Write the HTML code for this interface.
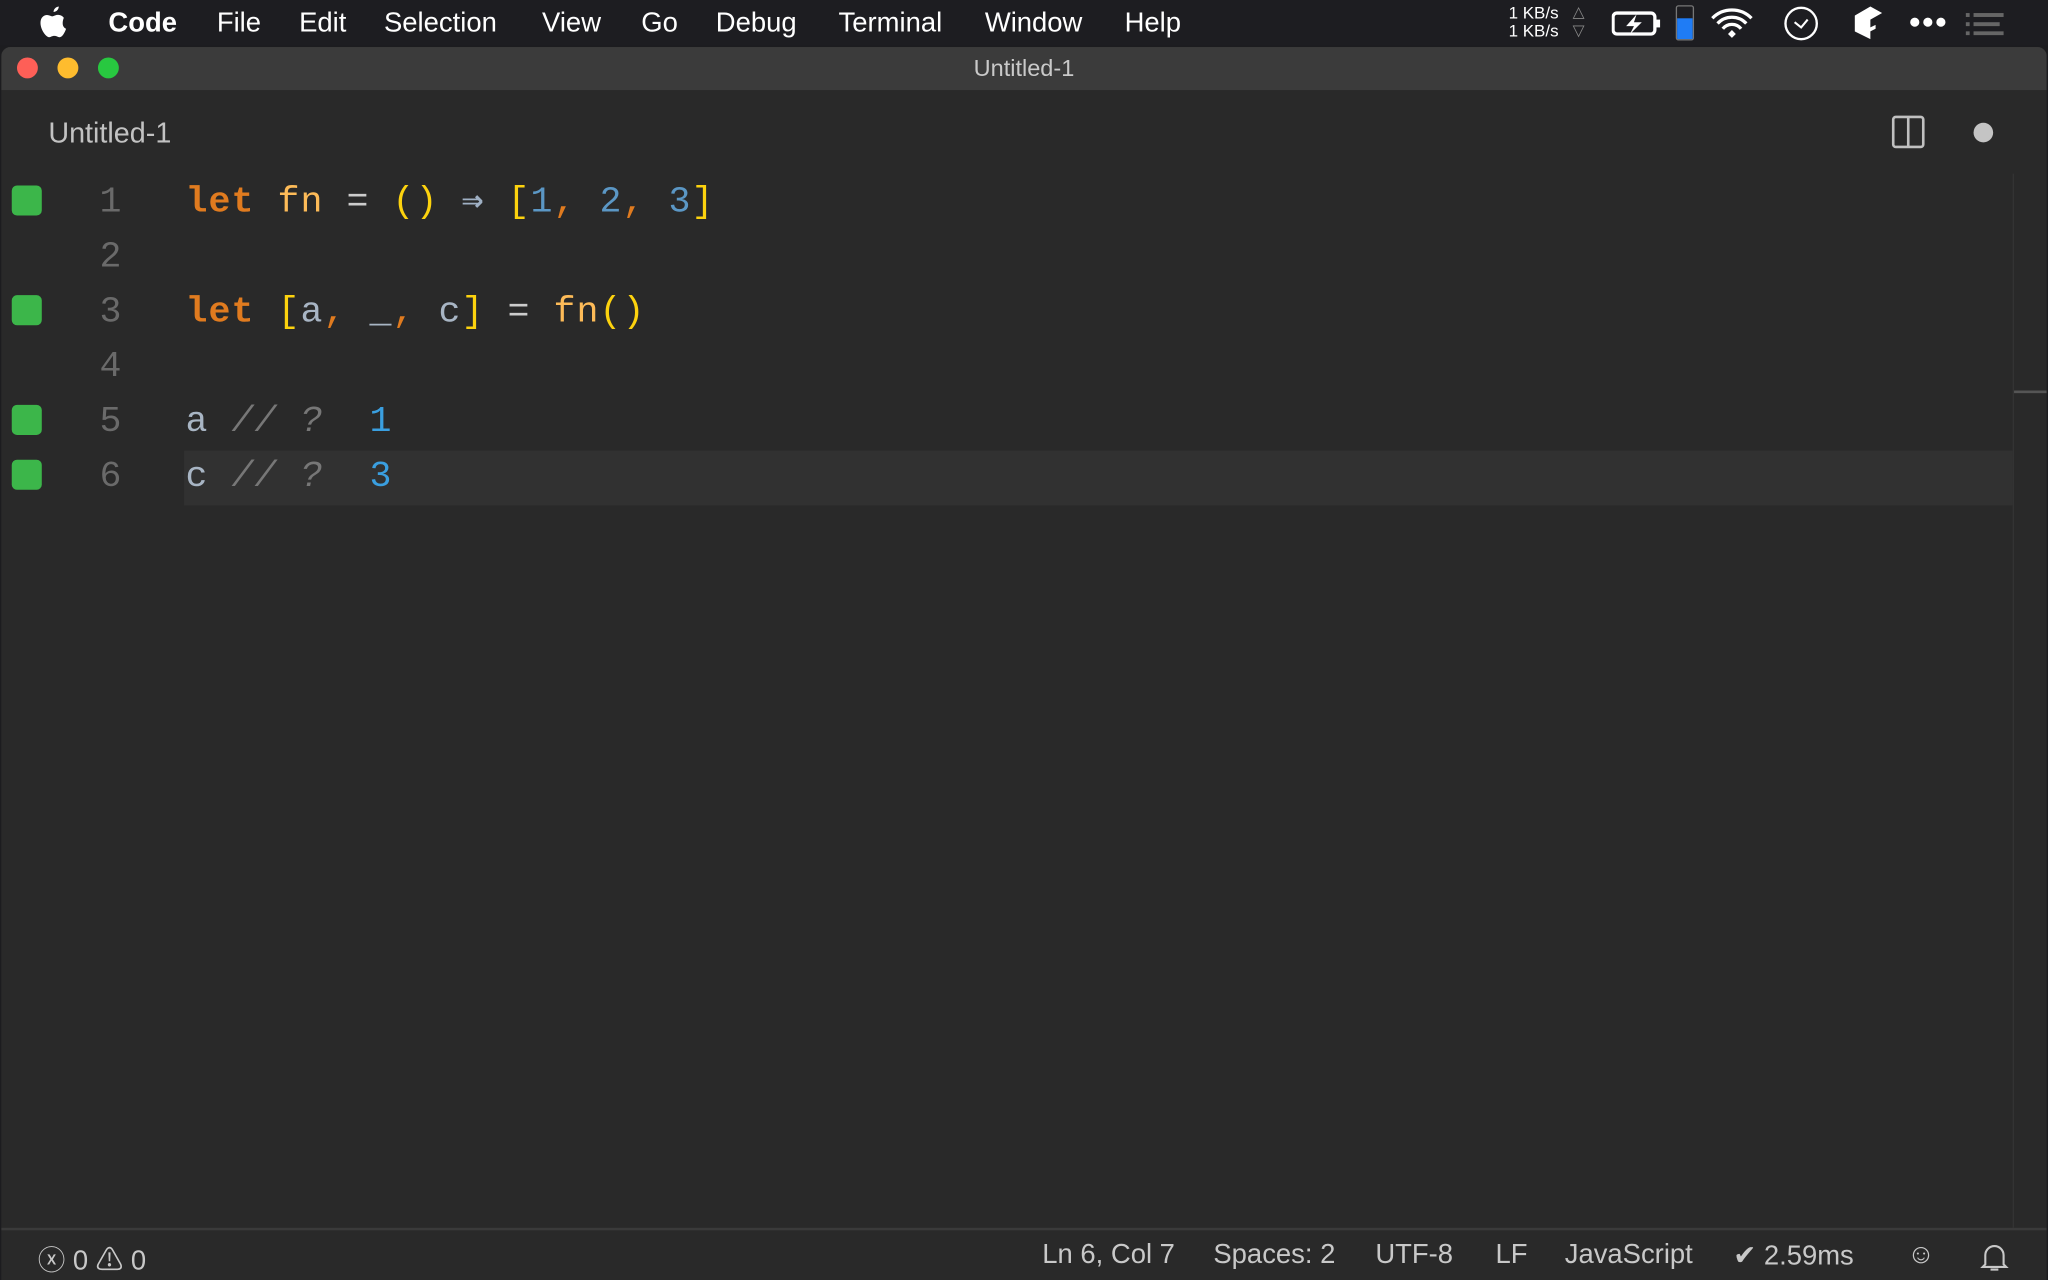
<!DOCTYPE html>
<html><head><meta charset="utf-8"><style>
html,body{margin:0;padding:0;width:2048px;height:1280px;overflow:hidden;background:#1c1c1f}
#w{position:absolute;left:0;top:0;width:1568px;height:980px;transform:scale(1.306122);transform-origin:0 0;font-family:"Liberation Sans",sans-serif}
.menu{position:absolute;left:0;top:0;width:1568px;height:35px;background:#1d1d21;color:#fff;font-size:21px}
.menu span{position:absolute;top:6px}
.win{position:absolute;left:1px;top:36px;width:1566px;height:944px;background:#292929;border-radius:7px 7px 0 0;overflow:hidden}
.title{position:absolute;left:0;top:0;width:100%;height:33px;background:#3b3b3b;color:#c9c9c9;font-size:18px;text-align:center;line-height:33px}
.dot{position:absolute;top:8px;width:16px;height:16px;border-radius:50%}
.tab{position:absolute;left:36px;top:53px;color:#c2c2c2;font-size:22px}
.code{position:absolute;font-family:"Liberation Mono",monospace;font-size:28px;letter-spacing:0.8px;line-height:42px;white-space:pre}
.g{position:absolute;left:8px;width:23px;height:23px;background:#3cb64a;border-radius:4px}
.ln{position:absolute;left:40px;width:52px;text-align:right;font-family:"Liberation Mono",monospace;font-size:28px;color:#6a6a6a;line-height:42px}
.status{position:absolute;left:0;top:904px;width:100%;height:40px;border-top:2px solid #3a3a3a;background:#292929;color:#c8c8c8;font-size:21px}
.status span{position:absolute;top:7px}
</style></head><body><div id="w">
<div class="menu">
<svg style="position:absolute;left:30px;top:5px" width="22" height="25" viewBox="0 0 22 25"><path d="M15 0c0 2-1.5 4-4 4.2C11 2 12.7.3 15 0zM18 13c0 3 2.5 4 2.6 4-1 3-3 6.5-5 6.5-1.5 0-2-1-4-1s-2.6 1-4 1C5.5 23.5 1 18 1 12.5 1 8.5 3.5 6.5 6 6.5c1.6 0 3 1 4 1s2.5-1.2 4.5-1.1c.8 0 3 .3 4.400 2.300C18.800 8.800 18 10.5 18 13z" fill="#fff"/></svg>
<span style="left:83px;font-weight:bold">Code</span><span style="left:166px">File</span><span style="left:229px">Edit</span><span style="left:294px">Selection</span><span style="left:415px">View</span><span style="left:491px">Go</span><span style="left:548px">Debug</span><span style="left:642px">Terminal</span><span style="left:754px">Window</span><span style="left:861px">Help</span>
<div style="position:absolute;left:1155px;top:3px;font-size:13px;line-height:14px">1 KB/s<br>1 KB/s</div>
<div style="position:absolute;left:1204px;top:2px;font-size:12px;line-height:14px;color:#888">△<br>▽</div>
<svg style="position:absolute;left:1234px;top:8px" width="44" height="22"><rect x="1" y="2" width="32" height="16" rx="3" fill="none" stroke="#fff" stroke-width="2.5"/><rect x="34" y="7" width="3" height="6" fill="#fff"/><path d="M19 3l-8 9h6l-3 6 9-9h-6z" fill="#fff"/></svg>
<div style="position:absolute;left:1283px;top:4px;width:12px;height:25px;border:1.5px solid #777;border-radius:2px;overflow:hidden"><div style="margin-top:9px;height:16px;background:#1f7cf5"></div></div>
<svg style="position:absolute;left:1309px;top:6px" width="34" height="24" viewBox="0 0 34 24"><path d="M2 8a21 21 0 0 1 30 0M6 12a15 15 0 0 1 22 0M10 16a9 9 0 0 1 14 0" stroke="#fff" stroke-width="2.5" fill="none"/><path d="M14 20l3-3 3 3-3 3z" fill="#fff"/></svg>
<svg style="position:absolute;left:1365px;top:4px" width="28" height="28"><circle cx="14" cy="14" r="12" fill="none" stroke="#fff" stroke-width="1.8"/><path d="M9 13l5 4 5-6" stroke="#fff" stroke-width="1.6" fill="none"/></svg>
<svg style="position:absolute;left:1420px;top:5px" width="22" height="26"><path d="M0 7L12 0l9 5-9 5v6l4-2v3l-4 2v6L0 19z" fill="#fff"/></svg>
<svg style="position:absolute;left:1462px;top:12px" width="28" height="10"><circle cx="4" cy="5" r="3.5" fill="#fff"/><circle cx="14" cy="5" r="3.5" fill="#fff"/><circle cx="24" cy="5" r="3.5" fill="#fff"/></svg>
<svg style="position:absolute;left:1505px;top:9px" width="30" height="18"><g fill="#666"><rect x="0" y="1" width="3" height="3"/><rect x="6" y="1" width="23" height="3"/><rect x="0" y="8" width="3" height="3"/><rect x="6" y="8" width="20" height="3"/><rect x="0" y="15" width="3" height="3"/><rect x="6" y="15" width="23" height="3"/></g></svg>
</div>
<div class="win">
<div class="title">Untitled-1</div>
<div class="dot" style="left:12px;background:#fe5f57"></div><div class="dot" style="left:43px;background:#febc2e"></div><div class="dot" style="left:74px;background:#28c840"></div>
<div class="tab">Untitled-1</div>
<svg style="position:absolute;left:1447px;top:52px" width="26" height="26"><rect x="1.5" y="1.5" width="23" height="23" rx="2" fill="none" stroke="#c0c0c0" stroke-width="2"/><line x1="13" y1="2" x2="13" y2="24" stroke="#c0c0c0" stroke-width="2"/></svg>
<div style="position:absolute;left:1510px;top:58px;width:15px;height:15px;border-radius:50%;background:#c4c4c4"></div>
<div style="position:absolute;left:1540px;top:97px;width:1px;height:810px;background:#333"></div>
<div style="position:absolute;left:1541px;top:263px;width:25px;height:2px;background:#555"></div>
<div style="position:absolute;left:140px;top:309px;width:1400px;height:42px;background:#313131"></div>
<div class="g" style="top:106px"></div><div class="g" style="top:190px"></div><div class="g" style="top:274px"></div><div class="g" style="top:316px"></div>
<div class="ln" style="top:99px">1<br>2<br>3<br>4<br>5<br>6</div>
<div class="code" style="left:141px;top:99px"><b style="color:#e07b1f">let</b> <span style="color:#fdbb58">fn</span> <span style="color:#ccc">=</span> <span style="color:#fcd20e">()</span> <b style="color:#9fb0c4">⇒</b> <span style="color:#fcd20e">[</span><span style="color:#5b97c5">1</span><span style="color:#e07b1f">,</span> <span style="color:#5b97c5">2</span><span style="color:#e07b1f">,</span> <span style="color:#5b97c5">3</span><span style="color:#fcd20e">]</span>

<b style="color:#e07b1f">let</b> <span style="color:#fcd20e">[</span><span style="color:#a8b5c4">a</span><span style="color:#e07b1f">,</span> <span style="color:#a8b5c4">_</span><span style="color:#e07b1f">,</span> <span style="color:#a8b5c4">c</span><span style="color:#fcd20e">]</span> <span style="color:#ccc">=</span> <span style="color:#fdbb58">fn</span><span style="color:#fcd20e">()</span>

<span style="color:#a8b5c4">a</span> <i style="color:#777">// ?</i>  <span style="color:#3a9fe0">1</span>
<span style="color:#a8b5c4">c</span> <i style="color:#777">// ?</i>  <span style="color:#3a9fe0">3</span></div>
<div class="status">
<span style="left:28px">ⓧ 0 ⚠ 0</span>
<span style="left:797px">Ln 6, Col 7</span><span style="left:928px">Spaces: 2</span><span style="left:1052px">UTF-8</span><span style="left:1144px">LF</span><span style="left:1197px">JavaScript</span><span style="left:1326px">✔ 2.59ms</span><span style="left:1459px">☺</span>
<svg style="position:absolute;left:1515px;top:9px" width="22" height="24"><path d="M4 17V10a7 7 0 0 1 14 0v7l2 2H2z M8 21h6" fill="none" stroke="#c8c8c8" stroke-width="1.6"/></svg>
</div>
</div>
</div></body></html>
